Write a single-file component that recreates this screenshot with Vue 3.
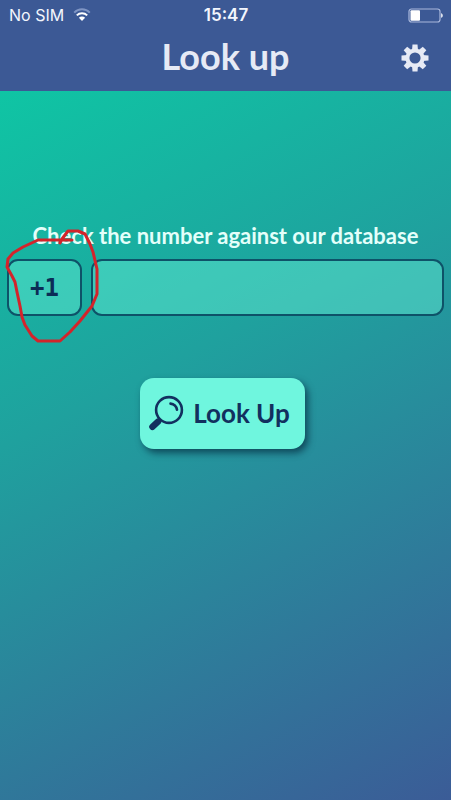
<script setup>
import { ref } from 'vue'

const dialCode = ref('+1')
const number = ref('')
</script>

<template>
  <div class="screen">
    <header class="header">
      <div class="status">
        <div class="carrier">
          <span>No SIM</span>
          <svg class="wifi" width="18" height="14" viewBox="0 0 18 14" aria-hidden="true">
            <path d="M1.2 4.6a11 11 0 0 1 15.6 0" fill="none" stroke="#7f95c4" stroke-width="2" />
            <path d="M3.8 7.4a7.3 7.3 0 0 1 10.4 0" fill="none" stroke="#fff" stroke-width="2" />
            <path d="M9 13 5.9 9.8a4.4 4.4 0 0 1 6.2 0z" fill="#fff" />
          </svg>
        </div>
        <time class="clock">15:47</time>
        <svg class="battery" width="36" height="15" viewBox="0 0 36 15" aria-hidden="true">
          <rect x="2" y="1" width="31" height="13" rx="2.5" fill="none" stroke="#a9b8dc" stroke-width="1.2" />
          <rect x="3.5" y="2.3" width="9.5" height="10.4" rx="1" fill="#fff" />
          <path d="M34.2 5.2c2 .6 2 4 0 4.6z" fill="#fff" />
        </svg>
      </div>
      <div class="bar">
        <h1 class="title">Look up</h1>
        <button class="settings" type="button" aria-label="Settings">
          <svg width="28" height="28" viewBox="-14 -14 28 28" aria-hidden="true">
            <g fill="#e6eaf5">
              <path d="M-2.5-13.5h5l.5 6h-6z" />
              <path d="M-2.5-13.5h5l.5 6h-6z" transform="rotate(45)" />
              <path d="M-2.5-13.5h5l.5 6h-6z" transform="rotate(90)" />
              <path d="M-2.5-13.5h5l.5 6h-6z" transform="rotate(135)" />
              <path d="M-2.5-13.5h5l.5 6h-6z" transform="rotate(180)" />
              <path d="M-2.5-13.5h5l.5 6h-6z" transform="rotate(225)" />
              <path d="M-2.5-13.5h5l.5 6h-6z" transform="rotate(270)" />
              <path d="M-2.5-13.5h5l.5 6h-6z" transform="rotate(315)" />
            </g>
            <circle r="7.6" fill="none" stroke="#e6eaf5" stroke-width="4" />
          </svg>
        </button>
      </div>
    </header>

    <main class="content">
      <form class="form" @submit.prevent>
        <label class="caption" for="number">Check the number against our database</label>
        <div class="fields">
          <button class="field code" type="button">{{ dialCode }}</button>
          <input id="number" v-model="number" class="field number" type="tel" />
          <svg class="scribble" width="100" height="120" viewBox="0 0 100 120" aria-hidden="true">
            <path
              d="M72 13H38L23 20 13 26 8 32 7 40 12 49 15 55 17 65 20 79 22 90 25 98 32 109 38 114H60L70 105 80 94 92 79 97 67V42L93 25 90 17 85 7 78 4 68 4 62 12 60 16"
              fill="none"
              stroke="#d3242b"
              stroke-width="3"
              stroke-linejoin="round"
              stroke-linecap="round"
            />
          </svg>
        </div>
        <button class="submit" type="submit">
          <svg width="36" height="36" viewBox="0 0 36 36" aria-hidden="true">
            <circle cx="20" cy="15" r="12.9" fill="none" stroke="#12305f" stroke-width="2.6" />
            <path d="M21.5 8.6a7.2 7.2 0 0 1 6.5 6.2" fill="none" stroke="#12305f" stroke-width="2.6" stroke-linecap="round" />
            <path d="m11.5 23.7-3 3" stroke="#12305f" stroke-width="3.4" />
            <path d="M9 26.6 3.4 31.8" stroke="#12305f" stroke-width="6.4" stroke-linecap="round" />
          </svg>
          <span>Look Up</span>
        </button>
      </form>
    </main>
  </div>
</template>

<style>
body {
  margin: 0;
}
</style>

<style scoped>
.screen {
  display: flex;
  flex-direction: column;
  min-height: 100vh;
  font-family: Lato, "Liberation Sans", sans-serif;
  font-weight: 700;
}

button {
  font: inherit;
  cursor: pointer;
}

.header {
  background: #3c5995;
  padding-bottom: 12px;
}

.status {
  display: grid;
  grid-template-columns: 1fr auto 1fr;
  align-items: center;
  height: 30px;
  padding: 0 8px 0 9px;
  color: #f3f6fd;
  font-family: Inter, Roboto, sans-serif;
  font-size: 16px;
  font-weight: 400;
}

.carrier {
  display: flex;
  align-items: center;
  gap: 9px;
}

.clock {
  font-size: 17px;
  font-weight: 600;
}

.battery {
  justify-self: end;
}

.bar {
  display: grid;
  grid-template-columns: 1fr auto 1fr;
  align-items: center;
  height: 49px;
  padding: 4px 22px 0;
  box-sizing: border-box;
}

.title {
  grid-column: 2;
  margin: 0;
  padding-bottom: 4px;
  color: #e6eaf5;
  font-size: 36px;
  line-height: 44px;
}

.settings {
  display: flex;
  justify-self: end;
  padding: 0;
  border: 0;
  background: none;
}

.content {
  flex: 1;
  padding: 132px 7px 32px;
  background: linear-gradient(153deg, #0fc5a4, #1fa19e 38%, #3b5c97);
}

.form {
  display: flex;
  flex-direction: column;
  align-items: center;
}

.caption {
  color: #e4fffa;
  font-size: 22px;
  line-height: 26px;
}

.fields {
  position: relative;
  display: flex;
  align-self: stretch;
  gap: 9px;
  margin: 10px 0 62px;
}

.field {
  box-sizing: border-box;
  height: 57px;
  border: 2px solid #0e5268;
  border-radius: 11px;
  background: rgba(110, 245, 220, 0.42);
  color: #0b2d56;
}

.code {
  flex: none;
  width: 75px;
  padding: 0;
  font-family: "DejaVu Sans Mono", monospace;
  font-size: 24px;
  font-weight: 700;
}

.number {
  flex: 1;
  min-width: 0;
  padding: 0 16px;
  font-family: inherit;
  font-size: 22px;
}

.scribble {
  position: absolute;
  top: -32px;
  left: -7px;
  pointer-events: none;
}

.submit {
  display: flex;
  align-items: center;
  gap: 8px;
  height: 71px;
  margin-right: 6px;
  padding: 0 15px 2px 9px;
  border: 0;
  border-radius: 14px;
  background: #6ff6de;
  box-shadow: 3px 4px 7px rgba(8, 50, 70, 0.75);
  color: #12305f;
  font-size: 26px;
}
</style>
